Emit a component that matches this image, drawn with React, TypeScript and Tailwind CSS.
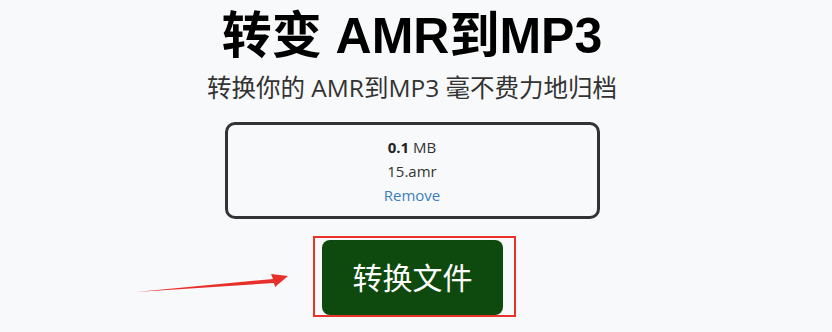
import React from 'react';

const cjk = '"Open Sans", "Noto Sans CJK SC", sans-serif';

function App() {
  return (
    <div className="h-[332px] w-[832px] overflow-hidden bg-[#f8f9fa]" style={{ fontFamily: cjk }}>
      <div className="flex flex-col items-center pr-[8px]">
        <h1
          className="mt-[7px] text-[50px] font-bold leading-[58px] text-black"
          style={{ fontFamily: '"Liberation Sans", "Noto Sans CJK SC", sans-serif' }}
        >
          转变 AMR到MP3
        </h1>
        <p className="mt-[7px] text-[24.5px] leading-[32px] text-[#333]">转换你的 AMR到MP3 毫不费力地归档</p>

        <div className="mt-[18px] flex h-[97px] w-[375px] flex-col items-center justify-center rounded-[10px] border-[3px] border-[#333] text-[15px] leading-[24px] text-[#333]">
          <div>
            <span className="font-bold text-[#222]">0.1</span> MB
          </div>
          <div>15.amr</div>
          <div className="text-[#3a7fc1]">Remove</div>
        </div>

        <div className="relative ml-[5px] mt-[17px]">
          {/* annotation arrow */}
          <svg className="absolute left-[-178px] top-[34px]" width="160" height="26" viewBox="0 0 160 26">
            <path d="M1 22 L138 9 L136 4 L153 6 L140 17 L139 13 Z" fill="#e8302a" />
          </svg>
          <div className="border-2 border-[#e8332b] pl-[7px] pr-[11px] pt-[2px]">
            <button className="flex h-[75px] w-[181px] items-center justify-center rounded-[8px] bg-[#0e4a0e] text-[30px] text-white">
              转换文件
            </button>
          </div>
        </div>
      </div>
    </div>
  );
}

export default App;
